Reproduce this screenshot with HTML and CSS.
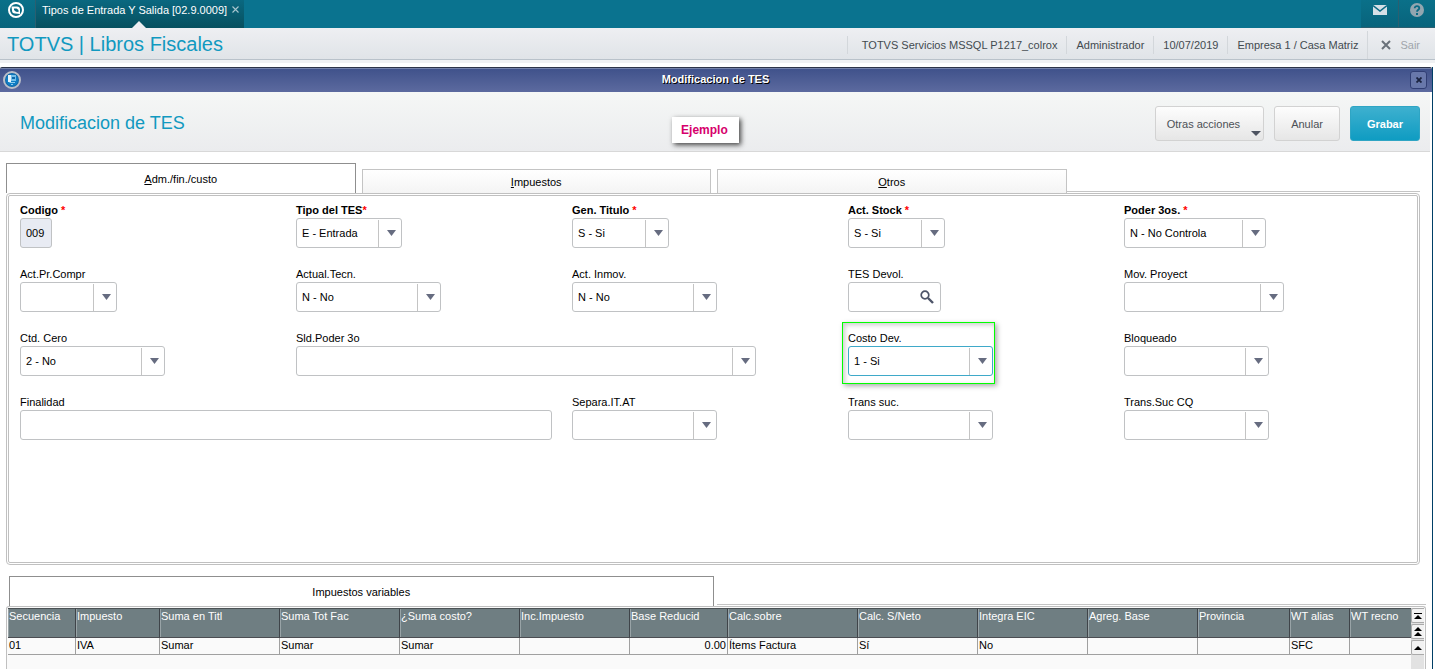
FILE: index.html
```
<!DOCTYPE html>
<html lang="es">
<head>
    <meta charset="UTF-8">
    <meta name="viewport" content="width=device-width, initial-scale=1.0">
    <title>TOTVS | Libros Fiscales</title>
    <link rel="stylesheet" href="styles.css">
</head>
<body>
    <nav class="topbar">
        <a class="home" href="#" aria-label="TOTVS">
            <svg width="16" height="16" viewBox="0 0 16 16">
                <circle cx="8" cy="8" r="7" fill="none" stroke="#fff" stroke-width="2"/>
                <path d="M3.500 4.500 9 4.500Q12 4.500 12 7.500V12L7 11.500Q4 11.500 4 8.500z" fill="#fff"/>
                <path d="M6 6.500 8.500 6.500 10.500 8v2L8 9.800 6 8z" fill="#0a6a84"/>
            </svg>
        </a>
        <div class="open-tab">
            <a href="#">Tipos de Entrada Y Salida [02.9.0009]</a>
            <button class="tab-close" aria-label="Cerrar">
                <svg width="7" height="7" viewBox="0 0 7 7"><path d="M.5.5l6 6m0-6l-6 6" stroke="#a9c6cf" stroke-width="1.1"/></svg>
            </button>
        </div>
        <div class="top-icons">
            <button aria-label="Mensajes">
                <svg width="14" height="10" viewBox="0 0 14 10">
                    <path d="M0 0h14v10H0z" fill="#d5e0e6"/>
                    <path d="M0 .5 7 6l7-5.500" fill="none" stroke="#0a6a84" stroke-width="1.4"/>
                </svg>
            </button>
            <button aria-label="Ayuda">
                <svg width="14" height="14" viewBox="0 0 14 14">
                    <circle cx="7" cy="7" r="7" fill="#92a6b0"/>
                    <path d="M4.700 5.300C4.700 2.300 9.300 2.500 9.300 5.200 9.300 6.800 7 6.800 7 8.800" fill="none" stroke="#0a6a84" stroke-width="1.8"/>
                    <path d="M6 10h2v2H6z" fill="#0a6a84"/>
                </svg>
            </button>
        </div>
    </nav>

    <header class="app-header">
        <h1>TOTVS | Libros Fiscales</h1>
        <ul class="session">
            <li>TOTVS Servicios MSSQL P1217_colrox</li>
            <li>Administrador</li>
            <li>10/07/2019</li>
            <li>Empresa 1 / Casa Matriz</li>
        </ul>
        <button class="exit">
            <svg width="10" height="10" viewBox="0 0 10 10"><path d="M1 1l8 8m0-8L1 9" stroke="#69717a" stroke-width="2"/></svg>
            Sair
        </button>
    </header>

    <main class="window">
        <div class="titlebar">
            <svg width="18" height="18" viewBox="0 0 18 18">
                <circle cx="9" cy="9" r="8" fill="#1268a8" stroke="#b9bec9" stroke-width="2"/>
                <circle cx="9" cy="9" r="6" fill="#0f7dc4"/>
                <path d="M5 4h3v7H5z" fill="#e6f4fc"/>
                <path d="M8 4h5v6H8z" fill="#74bfe8"/>
                <path d="M9 6h3v2H9z" fill="#0f67a8"/>
                <path d="M6 11h6v1H7zM8 13h2v1H8z" fill="#8fcdee"/>
            </svg>
            <span class="title">Modificacion de TES</span>
            <button class="win-close" aria-label="Cerrar ventana">
                <svg width="6" height="6" viewBox="0 0 6 6"><path d="M.5.5l5 5m0-5l-5 5" stroke="#1a2340" stroke-width="1.8"/></svg>
            </button>
        </div>

        <div class="toolbar">
            <h2>Modificacion de TES</h2>
            <button class="btn btn-menu">Otras acciones</button>
            <button class="btn">Anular</button>
            <button class="btn btn-primary">Grabar</button>
            <span class="note">Ejemplo</span>
        </div>

        <div class="tabs" role="tablist">
            <button class="tab active" role="tab"><u>A</u>dm./fin./custo</button>
            <button class="tab" role="tab"><u>I</u>mpuestos</button>
            <button class="tab" role="tab"><u>O</u>tros</button>
            <span class="tab-line"></span>
        </div>

        <form class="panel">
            <div class="field required">
                <label for="codigo">Codigo <i>*</i></label>
                <input class="w-code" id="codigo" type="text" value="009" readonly>
            </div>
            <div class="field required">
                <label for="tipo">Tipo del TES<i>*</i></label>
                <span class="combo w-tipo"><select id="tipo"><option>E - Entrada</option></select></span>
            </div>
            <div class="field required">
                <label for="titulo">Gen. Titulo <i>*</i></label>
                <span class="combo w-s"><select id="titulo"><option>S - Si</option></select></span>
            </div>
            <div class="field required">
                <label for="stock">Act. Stock <i>*</i></label>
                <span class="combo w-s"><select id="stock"><option>S - Si</option></select></span>
            </div>
            <div class="field required">
                <label for="poder">Poder 3os. <i>*</i></label>
                <span class="combo w-poder"><select id="poder"><option>N - No Controla</option></select></span>
            </div>

            <div class="field">
                <label for="compr">Act.Pr.Compr</label>
                <span class="combo w-s"><select id="compr"><option></option></select></span>
            </div>
            <div class="field">
                <label for="tecn">Actual.Tecn.</label>
                <span class="combo"><select id="tecn"><option>N - No</option></select></span>
            </div>
            <div class="field">
                <label for="inmov">Act. Inmov.</label>
                <span class="combo"><select id="inmov"><option>N - No</option></select></span>
            </div>
            <div class="field">
                <label for="devol">TES Devol.</label>
                <span class="search">
                    <input id="devol" type="text">
                    <button type="button" aria-label="Buscar">
                        <svg width="14" height="14" viewBox="0 0 14 14">
                            <circle cx="5" cy="5" r="3.800" fill="none" stroke="#4d5468" stroke-width="1.7"/>
                            <path d="M8 8l5 5" stroke="#4d5468" stroke-width="2.4"/>
                        </svg>
                    </button>
                </span>
            </div>
            <div class="field">
                <label for="proyect">Mov. Proyect</label>
                <span class="combo w-l"><select id="proyect"><option></option></select></span>
            </div>

            <div class="field">
                <label for="cero">Ctd. Cero</label>
                <span class="combo"><select id="cero"><option>2 - No</option></select></span>
            </div>
            <div class="field span-2">
                <label for="sld">Sld.Poder 3o</label>
                <span class="combo w-xl"><select id="sld"><option></option></select></span>
            </div>
            <div class="field highlight">
                <label for="costo">Costo Dev.</label>
                <span class="combo focused"><select id="costo"><option>1 - Si</option></select></span>
            </div>
            <div class="field">
                <label for="bloq">Bloqueado</label>
                <span class="combo"><select id="bloq"><option></option></select></span>
            </div>

            <div class="field span-2">
                <label for="finalidad">Finalidad</label>
                <input class="w-text" id="finalidad" type="text">
            </div>
            <div class="field">
                <label for="separa">Separa.IT.AT</label>
                <span class="combo"><select id="separa"><option></option></select></span>
            </div>
            <div class="field">
                <label for="trans">Trans suc.</label>
                <span class="combo"><select id="trans"><option></option></select></span>
            </div>
            <div class="field">
                <label for="transcq">Trans.Suc CQ</label>
                <span class="combo"><select id="transcq"><option></option></select></span>
            </div>
        </form>

        <div class="grid-tabs" role="tablist">
            <button class="tab active" role="tab">Impuestos variables</button>
            <span class="tab-line"></span>
        </div>

        <section class="grid-panel">
            <table>
                <thead>
                    <tr>
                        <th>Secuencia</th>
                        <th>Impuesto</th>
                        <th>Suma en Titl</th>
                        <th>Suma Tot Fac</th>
                        <th>¿Suma costo?</th>
                        <th>Inc.Impuesto</th>
                        <th>Base Reducid</th>
                        <th>Calc.sobre</th>
                        <th>Calc. S/Neto</th>
                        <th>Integra EIC</th>
                        <th>Agreg. Base</th>
                        <th>Provincia</th>
                        <th>WT alias</th>
                        <th>WT recno</th>
                    </tr>
                </thead>
                <tbody>
                    <tr>
                        <td>01</td>
                        <td>IVA</td>
                        <td>Sumar</td>
                        <td>Sumar</td>
                        <td>Sumar</td>
                        <td></td>
                        <td class="num">0.00</td>
                        <td>Ítems Factura</td>
                        <td>Sí</td>
                        <td>No</td>
                        <td></td>
                        <td></td>
                        <td>SFC</td>
                        <td></td>
                    </tr>
                </tbody>
            </table>
            <div class="scroller">
                <button aria-label="Primero"><svg width="8" height="8" viewBox="0 0 8 8"><path d="M0 1h8v1H0zM4 3l4 4H0z"/></svg></button>
                <button aria-label="Página anterior"><svg width="8" height="10" viewBox="0 0 8 10"><path d="M4 0l4 4H0zM4 5l4 4H0z"/></svg></button>
                <button aria-label="Anterior"><svg width="8" height="6" viewBox="0 0 8 6"><path d="M4 1l4 4H0z"/></svg></button>
            </div>
        </section>
    </main>
</body>
</html>
```
FILE: styles.css
```
*, *::before, *::after{
    box-sizing: border-box;
}

body{
    margin: 0;
    min-height: 100vh;
    display: flex;
    flex-direction: column;
    font-family: "Liberation Sans", Arial, sans-serif;
    font-size: 11px;
    color: #000;
    background: #fff;
}

button, input, select{
    font: inherit;
    color: inherit;
    margin: 0;
}

button{
    padding: 0;
    border: none;
    background: none;
    cursor: pointer;
}

svg{
    display: block;
}

/* top bar */
.topbar{
    display: flex;
    height: 28px;
    background: #0a738f;
}

.home{
    width: 36px;
    padding: 2px 8px;
    background: linear-gradient(#0a7089, #08647c);
    border-right: 1px solid #2b5f70;
}

.open-tab{
    position: relative;
    display: flex;
    align-items: flex-start;
    gap: 5px;
    padding: 4px 5px 0 6px;
    background: linear-gradient(#0a6880, #07505f);
}

.open-tab a{
    color: #fff;
    text-decoration: none;
    line-height: 13px;
}

.open-tab::after{
    content: "";
    position: absolute;
    left: 50%;
    bottom: 0;
    margin-left: -8px;
    border: 7px solid transparent;
    border-top: 0;
    border-bottom-color: #eeeff2;
}

.tab-close{
    padding-top: 2px;
}

.top-icons{
    display: flex;
    margin-left: auto;
}

.top-icons button{
    display: flex;
    justify-content: center;
    align-items: center;
    width: 37px;
    padding-bottom: 8px;
    background: linear-gradient(#0a7089, #08647c);
    border-left: 1px solid #2b5f70;
    border-bottom: 1px solid #2b5f70;
}

.top-icons button:first-child{
    border-left: none;
}

/* session header */
.app-header{
    display: flex;
    align-items: center;
    height: 35px;
    padding: 0 0 2px 7px;
    background: linear-gradient(#eeeff2, #e0e4e8 31px, #b9c2ca 31px, #b9c2ca 32px, #f0f1f3 32px);
}

h1, h2{
    margin: 0;
    font-weight: normal;
    color: #1199c0;
}

h1{
    font-size: 20px;
}

.session{
    display: flex;
    margin: 0 0 0 auto;
    padding: 0;
    list-style: none;
    color: #434a50;
}

.session li{
    padding: 0 9px;
    line-height: 18px;
    border-left: 1px solid #d3d7db;
}

.session li:first-child{
    padding-left: 14px;
}

.exit{
    display: flex;
    align-items: center;
    gap: 9px;
    height: 28px;
    padding: 0 15px 0 13px;
    color: #a0a5ab;
    border-left: 1px solid #d3d7db;
}

/* window */
.window{
    flex: 1;
    display: flex;
    flex-direction: column;
    margin: 4px 2px 0 0;
    border-right: 1px solid #003f66;
}

.titlebar{
    display: flex;
    align-items: center;
    height: 25px;
    padding: 0 5px 0 3px;
    background: linear-gradient(#7482aa 1px, #40528b 1px, #5c6a9f);
    border-top: 1px solid #2d3448;
    border-radius: 2px 2px 0 0;
}

.title{
    flex: 1;
    padding-bottom: 2px;
    text-align: center;
    color: #fff;
    font-weight: bold;
    text-shadow: 1px 1px 0 #000;
}

.win-close{
    display: flex;
    align-items: center;
    justify-content: center;
    width: 17px;
    height: 18px;
    background: #6878ab;
    border: 1px solid #303e74;
    border-radius: 3px;
}

.toolbar{
    position: relative;
    display: flex;
    align-items: center;
    gap: 10px;
    height: 60px;
    margin-right: 2px;
    padding: 4px 10px 0 20px;
    background: linear-gradient(#f5f7f6, #ebecee);
    border-bottom: 1px solid #d8d8d8;
}

h2{
    flex: 1;
    font-size: 18px;
}

.btn{
    height: 35px;
    padding: 0 16px;
    color: #4c5056;
    background: linear-gradient(#fdfdfd, #e6e6e6);
    border: 1px solid #d2d2d2;
    border-radius: 3px;
}

.btn-menu{
    position: relative;
    padding: 0 23px 0 11px;
}

.btn-menu::after{
    content: "";
    position: absolute;
    right: 2px;
    bottom: 4px;
    border: 5px solid transparent;
    border-top-color: #4d5360;
    border-bottom: 0;
}

.btn-primary{
    color: #fff;
    font-weight: bold;
    background: linear-gradient(#3eb0cf, #0f9cc2);
    border-color: #2fa5c4;
}

/* floating remark over the toolbar */
.note{
    position: absolute;
    left: 47%;
    top: 25px;
    padding: 0 11px 0 9px;
    line-height: 26px;
    font-size: 12px;
    font-weight: bold;
    color: #d6006c;
    background: #fff;
    box-shadow: 2px 2px 5px #444;
}

.tabs, .grid-tabs{
    display: flex;
    align-items: flex-end;
}

.tabs{
    gap: 6px;
    margin: 11px 12px 0 6px;
}

.tab{
    height: 24px;
    border: 1px solid #c4c4c4;
    border-bottom: none;
    background: linear-gradient(#fff, #f4f4f4);
}

.tabs .tab{
    width: 25%;
}

.tab.active{
    height: 30px;
    border-color: #8f8f8f;
    background: #fff;
}

.tab-line{
    flex: 1;
    height: 2px;
    border-top: 1px solid #c4c4c4;
}

.tabs .tab-line{
    margin-left: -6px;
    flex: 1 0 25%;
}

.panel{
    display: grid;
    grid-template-columns: repeat(5, 1fr);
    align-content: start;
    row-gap: 20px;
    min-height: 372px;
    margin: 0 12px 0 6px;
    padding: 8px 17px 8px 11px;
    border: 3px double #c0c0c0;
    border-radius: 4px;
}

.field{
    display: flex;
    flex-direction: column;
    align-items: flex-start;
    min-width: 0;
}

.field label{
    padding-bottom: 2px;
    line-height: 12px;
}

.required label{
    font-weight: bold;
}

.required i{
    color: #f00;
    font-style: normal;
}

.span-2{
    grid-column: span 2;
}

.field > input, .combo, .search{
    height: 30px;
    border: 1px solid #c0c2c4;
    border-radius: 3px;
    background: #fff;
}

.field > input{
    padding: 0 5px;
}

.field > input[readonly]{
    background: #e8ebf3;
}

.combo{
    position: relative;
    width: 145px;
}

.combo select{
    appearance: none;
    width: 100%;
    height: 28px;
    padding: 0 26px 0 5px;
    border: none;
    outline: none;
    background: linear-gradient(#c4c4c4, #c4c4c4) right 22px top 1px / 1px 27px no-repeat;
}

.combo::after{
    content: "";
    position: absolute;
    right: 5px;
    top: 11px;
    width: 9px;
    height: 6px;
    background: #666c80;
    clip-path: polygon(0 0, 100% 0, 50% 100%);
    pointer-events: none;
}

.combo.focused{
    border-color: #3fa9c9;
}

.search{
    display: flex;
    align-items: center;
    width: 93px;
    padding-right: 6px;
}

.search input{
    flex: 1;
    min-width: 0;
    border: none;
    background: none;
}

.w-code{ width: 32px; }
.w-s{ width: 97px; }
.w-tipo{ width: 106px; }
.w-poder{ width: 142px; }
.w-l{ width: 160px; }
.w-xl{ width: 460px; }
.w-text{ width: 532px; }

/* green frame drawn round the field */
.highlight{
    position: relative;
}

.highlight::before{
    content: "";
    position: absolute;
    left: -6px;
    top: -10px;
    width: 153px;
    height: 62px;
    border: 1px solid #0f0;
    box-shadow: 2px 2px 5px #aaa, inset 2px 2px 5px #ccc;
    pointer-events: none;
}

/* taxes grid */
.grid-tabs{
    gap: 3px;
    margin: 11px 6px 0 9px;
}

.grid-tabs .tab{
    width: calc(50% - 4px);
}

.grid-panel{
    flex: 1;
    display: flex;
    align-items: flex-start;
    margin: 0 6px;
    border: 1px solid #c0c0c0;
    border-bottom: none;
    border-radius: 3px 3px 0 0;
    padding: 1px 1px 0;
    background: #fafafa;
}

table{
    flex: 1;
    width: 100%;
    table-layout: fixed;
    border-collapse: separate;
    border-spacing: 0;
}

th, td{
    padding: 0 1px;
    text-align: left;
    vertical-align: top;
    white-space: nowrap;
    overflow: hidden;
}

th{
    height: 30px;
    padding-top: 1px;
    font-weight: normal;
    line-height: 13px;
    color: #fff;
    background: #6f7e82;
    border-top: 1px solid #4b5154;
    border-bottom: 1px solid #4b4d52;
    border-right: 1px solid #3f4449;
    box-shadow: inset 1px 0 #98a3a6;
}

td{
    height: 17px;
    line-height: 14px;
    border-right: 1px solid #a0a0a0;
    border-bottom: 1px solid #a0a0a0;
}

th:last-child, td:last-child{
    border-right: none;
}

.num{
    text-align: right;
}

th:nth-child(1){ width: 68px; }
th:nth-child(2){ width: 84px; }
th:nth-child(3), th:nth-child(4), th:nth-child(5), th:nth-child(9){ width: 120px; }
th:nth-child(6), th:nth-child(10), th:nth-child(11){ width: 110px; }
th:nth-child(7){ width: 98px; }
th:nth-child(8){ width: 130px; }
th:nth-child(12){ width: 92px; }
th:nth-child(13){ width: 60px; }

.scroller{
    display: flex;
    flex-direction: column;
    gap: 1px;
    align-self: stretch;
    background: #e2e2e2;
}

.scroller button{
    display: flex;
    align-items: center;
    justify-content: center;
    width: 13px;
    height: 15px;
    background: #f2f2f2;
    border: 1px solid #aaa;
    border-right: none;
    border-radius: 2px 0 0 2px;
}
```
